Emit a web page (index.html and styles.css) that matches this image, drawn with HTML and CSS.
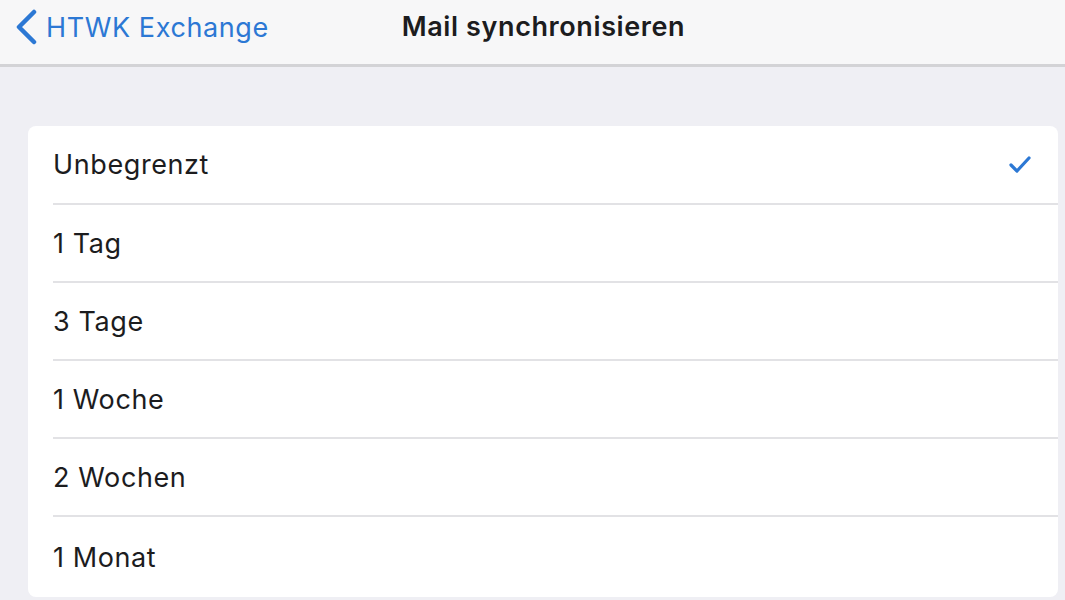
FILE: index.html
```html
<!DOCTYPE html>
<html lang="de">
<head>
  <meta charset="UTF-8">
  <title>Mail synchronisieren</title>
  <link rel="stylesheet" href="styles.css">
</head>
<body>

<div class="kopfzeile">
  <a class="zurueck" href="#">
    <svg class="chevron" width="24" height="36" viewBox="0 0 24 36">
      <path d="M20 3 L5 18 L20 33" fill="none" stroke="#2c78d4" stroke-width="4.5" stroke-linecap="round" stroke-linejoin="round"/>
    </svg>
    <span>HTWK Exchange</span>
  </a>
  <h1>Mail synchronisieren</h1>
</div>

<div class="inhalt">
  <ul class="liste">
    <li class="eintrag"><span>Unbegrenzt</span>
      <svg class="haken" width="24" height="20" viewBox="0 0 24 20">
        <path d="M3 11 L9 17 L21 4" fill="none" stroke="#2c78d4" stroke-width="3.2" stroke-linecap="round" stroke-linejoin="round"/>
      </svg>
    </li>
    <li class="eintrag"><span>1 Tag</span></li>
    <li class="eintrag"><span>3 Tage</span></li>
    <li class="eintrag"><span>1 Woche</span></li>
    <li class="eintrag"><span>2 Wochen</span></li>
    <li class="eintrag"><span>1 Monat</span></li>
  </ul>
</div>

</body>
</html>
```

FILE: styles.css
```css
body {
  font-family: Inter, "Liberation Sans", sans-serif;
  background-color: #efeff4;
  margin: 0;
  padding: 0;
  letter-spacing: 0.6px;
}

.kopfzeile {
  position: relative;
  height: 64px;
  background-color: #f7f7f8;
  border-bottom: 3px solid #d3d3d6;
  display: flex;
  justify-content: center;
}

.kopfzeile h1 {
  margin: 0 0 0 22px;
  height: 54px;
  line-height: 54px;
  font-size: 27px;
  font-weight: 600;
  color: #1c1c1e;
}

.zurueck {
  position: absolute;
  left: 14px;
  top: 0;
  height: 54px;
  display: flex;
  align-items: center;
  gap: 8px;
  color: #2c78d4;
  text-decoration: none;
  font-size: 27px;
}

.inhalt {
  padding: 59px 7px 0 28px;
}

.liste {
  list-style: none;
  margin: 0;
  padding: 0 0 0 25px;
  background-color: #ffffff;
  border-radius: 8px;
}

.eintrag {
  height: 78px;
  display: flex;
  align-items: center;
  justify-content: space-between;
  padding-right: 26px;
  border-bottom: 2px solid #e2e2e5;
  box-sizing: border-box;
  font-size: 27px;
  color: #1c1c1e;
}

.eintrag:first-child {
  height: 79px;
}

.eintrag:last-child {
  border-bottom: none;
  height: 80px;
}

.haken {
  margin-top: -2px;
}
```
